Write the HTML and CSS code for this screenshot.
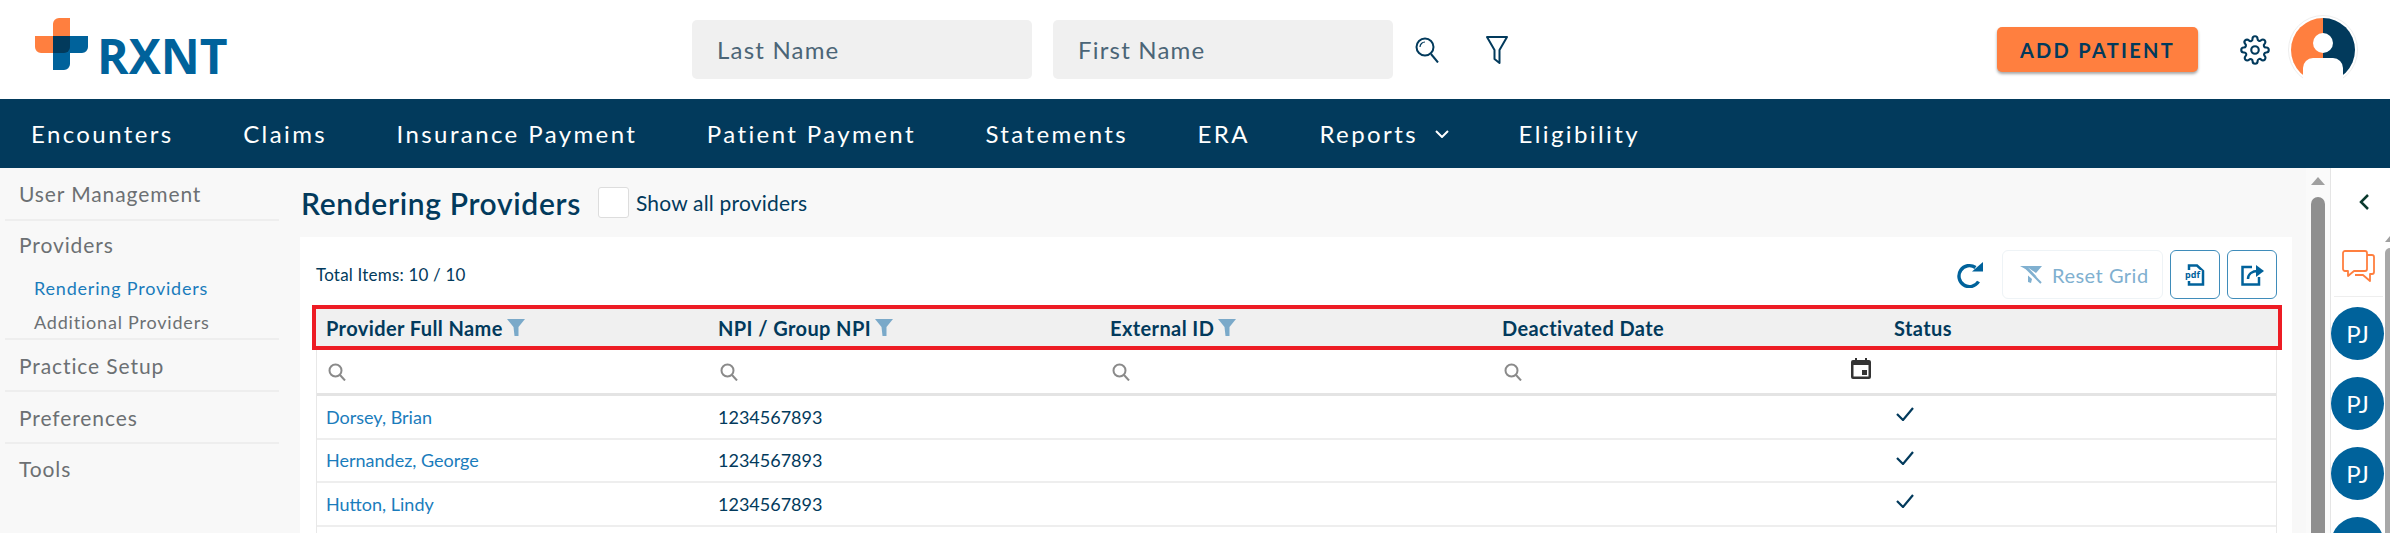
FILE: index.html
```html
<!DOCTYPE html>
<html lang="en">
<head>
    <meta charset="UTF-8">
    <meta name="viewport" content="width=device-width, initial-scale=1.0">
    <title>Rendering Providers</title>
    <link rel="stylesheet" href="styles.css">
</head>
<body>

    <!-- Top Header -->
    <header class="top-bar">
        <div class="logo">
            <svg class="logo-cross" viewBox="0 0 53 52" width="53" height="52">
                <path fill="#ff7f3f" d="M24 0H35V35H6a6 6 0 0 1-6-6V18H18V6a6 6 0 0 1 6-6z"/>
                <path fill="#00629b" d="M18 18H53V29a6 6 0 0 1-6 6H35V46a6 6 0 0 1-6 6H18z"/>
                <path fill="#023a5c" d="M18 18H35V29a6 6 0 0 1-6 6H18z"/>
            </svg>
            <span class="logo-text">RXNT</span>
        </div>
        <div class="name-search">
            <input class="name-input" type="text" placeholder="Last Name">
            <input class="name-input" type="text" placeholder="First Name">
        </div>
        <svg class="search-icon" viewBox="0 0 24 26" width="24" height="26" fill="none" stroke="#023a5c" stroke-width="2">
            <circle cx="10" cy="10" r="8.5"/>
            <path d="M16 17l7 8.5"/>
            <path d="M5 10a5 5 0 0 1 5-5" stroke-width="1.2"/>
        </svg>
        <svg class="funnel-icon" viewBox="0 0 22 28" width="22" height="28" fill="none" stroke="#023a5c" stroke-width="2">
            <path d="M1 1H21L13.5 14V27L8.500 23V14z" stroke-linejoin="round"/>
        </svg>
        <button class="add-patient">ADD PATIENT</button>
        <svg class="gear-icon" viewBox="0 0 24 24" width="30" height="30" fill="none" stroke="#023a5c" stroke-width="1.7" stroke-linejoin="round">
            <circle cx="12" cy="12" r="3"/>
            <path d="M19.400 15a1.650 1.650 0 0 0 .33 1.820l.06.06a2 2 0 1 1-2.830 2.830l-.06-.06a1.650 1.650 0 0 0-2.820 1.170V21a2 2 0 0 1-4 0v-.09a1.650 1.650 0 0 0-2.820-1.170l-.06.06a2 2 0 1 1-2.830-2.830l.06-.06A1.650 1.650 0 0 0 3.090 14H3a2 2 0 0 1 0-4h.09a1.650 1.650 0 0 0 1.170-2.820l-.06-.06a2 2 0 1 1 2.830-2.830l.06.06A1.650 1.650 0 0 0 10 3.090V3a2 2 0 0 1 4 0v.09a1.650 1.650 0 0 0 2.820 1.170l.06-.06a2 2 0 1 1 2.830 2.830l-.06.06A1.650 1.650 0 0 0 20.910 10H21a2 2 0 0 1 0 4h-.09a1.650 1.650 0 0 0-1.510 1z"/>
        </svg>
        <svg class="avatar" viewBox="0 0 70 70" width="70" height="70">
            <circle cx="35" cy="35" r="34.500" fill="#fff" stroke="#eeeeee"/>
            <path fill="#ff7f3f" d="M35 3a32 32 0 0 0 0 64z"/>
            <path fill="#023a5c" d="M35 3a32 32 0 0 1 0 64z"/>
            <circle cx="35" cy="28" r="10" fill="#fff"/>
            <path fill="#fff" d="M15 70V53a10 10 0 0 1 10-10H45a10 10 0 0 1 10 10V70z"/>
        </svg>
    </header>

    <!-- Main Nav -->
    <nav class="main-nav">
        <a class="nav-link">Encounters</a>
        <a class="nav-link">Claims</a>
        <a class="nav-link">Insurance Payment</a>
        <a class="nav-link">Patient Payment</a>
        <a class="nav-link">Statements</a>
        <a class="nav-link">ERA</a>
        <a class="nav-link">Reports
            <svg class="nav-chevron" viewBox="0 0 14 8" width="14" height="8" fill="none" stroke="#ffffff" stroke-width="2"><path d="M1 1l6 6 6-6"/></svg>
        </a>
        <a class="nav-link">Eligibility</a>
    </nav>

    <div class="page-body">
        <!-- Sidebar -->
        <aside class="sidebar">
            <div class="side-item first">User Management</div>
            <div class="side-group">
                <div class="side-head">Providers</div>
                <div class="side-sub active">Rendering Providers</div>
                <div class="side-sub">Additional Providers</div>
            </div>
            <div class="side-item">Practice Setup</div>
            <div class="side-item">Preferences</div>
            <div class="side-item last">Tools</div>
        </aside>

        <main class="content">
            <div class="title-row">
                <h1>Rendering Providers</h1>
                <span class="check-box"></span>
                <span class="check-label">Show all providers</span>
            </div>

            <section class="card">
                <div class="toolbar">
                    <span class="total-items">Total Items: 10 / 10</span>
                    <svg class="refresh-icon" viewBox="0 0 26 26" width="26" height="26" fill="none" stroke="#00629b" stroke-width="3.400">
                        <path d="M21.500 19.500A10.500 10.500 0 1 1 18.500 5.500"/>
                        <path fill="#00629b" stroke="none" d="M15 9.500H26V0z"/>
                    </svg>
                    <button class="reset-grid">
                        <svg viewBox="0 0 22 18" width="22" height="18">
                            <path fill="#80b0d0" d="M0 0H22L16 7 8 1.500 17 11 13 9 9 5z"/>
                            <path fill="#80b0d0" d="M8 9.500l4 3.500-1 4-3-1z"/>
                            <path stroke="#80b0d0" stroke-width="2" d="M5 1L21 17"/>
                        </svg>
                        Reset Grid
                    </button>
                    <button class="tool-btn">
                        <svg viewBox="0 0 20 22" width="20" height="22">
                            <path fill="none" stroke="#00629b" stroke-width="2.500" d="M4 6V1.500H12L18 7V20.500H4V17"/>
                            <text class="pdf-text" x="0" y="14">pdf</text>
                        </svg>
                    </button>
                    <button class="tool-btn">
                        <svg viewBox="0 0 23 22" width="23" height="22" fill="none" stroke="#00629b" stroke-width="2.500">
                            <path d="M11 3H1.500V20.500H18V13"/>
                            <path d="M7 15C7 10 11 7 17 7"/>
                            <path fill="#00629b" stroke="none" d="M15 1l8 6-8 6z"/>
                        </svg>
                    </button>
                </div>

                <!-- Grid -->
                <div class="grid">
                    <div class="grid-head">
                        <div class="col">Provider Full Name <svg class="col-filter" viewBox="0 0 18 17" width="18" height="17"><path fill="#7aa9c9" d="M0 0H18L11.500 8V17H7.500L6.500 8z"/></svg></div>
                        <div class="col">NPI / Group NPI <svg class="col-filter" viewBox="0 0 18 17" width="18" height="17"><path fill="#7aa9c9" d="M0 0H18L11.500 8V17H7.500L6.500 8z"/></svg></div>
                        <div class="col">External ID <svg class="col-filter" viewBox="0 0 18 17" width="18" height="17"><path fill="#7aa9c9" d="M0 0H18L11.500 8V17H7.500L6.500 8z"/></svg></div>
                        <div class="col">Deactivated Date</div>
                        <div class="col">Status</div>
                    </div>
                    <div class="grid-row filter-row">
                        <div class="col"><svg class="mini-search" viewBox="0 0 18 18" width="18" height="18" fill="none" stroke="#8a8a8a" stroke-width="2"><circle cx="7.500" cy="7.500" r="6"/><path d="M12 12l5 5.500"/></svg></div>
                        <div class="col"><svg class="mini-search" viewBox="0 0 18 18" width="18" height="18" fill="none" stroke="#8a8a8a" stroke-width="2"><circle cx="7.500" cy="7.500" r="6"/><path d="M12 12l5 5.500"/></svg></div>
                        <div class="col"><svg class="mini-search" viewBox="0 0 18 18" width="18" height="18" fill="none" stroke="#8a8a8a" stroke-width="2"><circle cx="7.500" cy="7.500" r="6"/><path d="M12 12l5 5.500"/></svg></div>
                        <div class="col date-col">
                            <svg class="mini-search" viewBox="0 0 18 18" width="18" height="18" fill="none" stroke="#8a8a8a" stroke-width="2"><circle cx="7.500" cy="7.500" r="6"/><path d="M12 12l5 5.500"/></svg>
                            <svg class="calendar" viewBox="0 0 20 21" width="20" height="21">
                                <path fill="#333333" d="M4 0H6V2H14V0H16V2H18a2 2 0 0 1 2 2V19a2 2 0 0 1-2 2H2a2 2 0 0 1-2-2V4a2 2 0 0 1 2-2H4z"/>
                                <path fill="#ffffff" d="M2.500 7H17.500V18.500H2.500z"/>
                                <path fill="#333333" d="M11 12H16V17H11z"/>
                            </svg>
                        </div>
                        <div class="col"></div>
                    </div>
                    <div class="grid-row">
                        <div class="col"><a class="provider-link">Dorsey, Brian</a></div>
                        <div class="col">1234567893</div>
                        <div class="col"></div>
                        <div class="col"></div>
                        <div class="col"><svg class="check" viewBox="0 0 18 14" width="18" height="14" fill="none" stroke="#023a5c" stroke-width="2.200"><path d="M1 7l6 6L17 1"/></svg></div>
                    </div>
                    <div class="grid-row">
                        <div class="col"><a class="provider-link">Hernandez, George</a></div>
                        <div class="col">1234567893</div>
                        <div class="col"></div>
                        <div class="col"></div>
                        <div class="col"><svg class="check" viewBox="0 0 18 14" width="18" height="14" fill="none" stroke="#023a5c" stroke-width="2.200"><path d="M1 7l6 6L17 1"/></svg></div>
                    </div>
                    <div class="grid-row">
                        <div class="col"><a class="provider-link">Hutton, Lindy</a></div>
                        <div class="col">1234567893</div>
                        <div class="col"></div>
                        <div class="col"></div>
                        <div class="col"><svg class="check" viewBox="0 0 18 14" width="18" height="14" fill="none" stroke="#023a5c" stroke-width="2.200"><path d="M1 7l6 6L17 1"/></svg></div>
                    </div>
                </div>
            </section>
        </main>

        <!-- Page scrollbar -->
        <div class="page-scroll">
            <span class="scroll-arrow"></span>
            <span class="scroll-thumb"></span>
        </div>

        <!-- Right Panel -->
        <aside class="right-panel">
            <div class="panel-top">
                <svg viewBox="0 0 10 16" width="10" height="16" fill="none" stroke="#0b3a2e" stroke-width="2.500"><path d="M9 1L2 8l7 7"/></svg>
            </div>
            <div class="panel-body">
                <div class="panel-list">
                    <div class="panel-chat">
                        <svg viewBox="0 0 33 32" width="33" height="32" fill="none" stroke="#ff7f3f" stroke-width="1.800" stroke-linejoin="round">
                            <path d="M3 1H23a2 2 0 0 1 2 2V19a2 2 0 0 1-2 2H12L6 26V21H3a2 2 0 0 1-2-2V3a2 2 0 0 1 2-2z"/>
                            <path d="M25 5H30a2 2 0 0 1 2 2V22a2 2 0 0 1-2 2H28V31L21 25H13"/>
                        </svg>
                    </div>
                    <div class="initials">PJ</div>
                    <div class="initials">PJ</div>
                    <div class="initials">PJ</div>
                    <div class="initials"></div>
                </div>
                <div class="panel-scroll">
                    <span class="panel-arrow"></span>
                    <span class="panel-thumb"></span>
                </div>
            </div>
        </aside>
    </div>

</body>
</html>
```

FILE: styles.css
```css
html, body {
    margin: 0;
    padding: 0;
    height: 100%;
    overflow: hidden;
}

body {
    display: flex;
    flex-direction: column;
    background-color: #ffffff;
    color: #023a5c;
    font-family: Lato, "Open Sans", sans-serif;
}

/* Header */
.top-bar {
    display: flex;
    align-items: center;
    height: 99px;
    flex-shrink: 0;
    padding: 0 32px 0 35px;
    box-sizing: border-box;
}

.logo {
    display: flex;
    align-items: flex-start;
    width: 657px;
    flex-shrink: 0;
}

.logo-text {
    margin: 12px 0 0 9px;
    font-family: "Open Sans", sans-serif;
    font-size: 48px;
    font-weight: 700;
    line-height: 52px;
    color: #00629b;
}

.name-search {
    display: flex;
    gap: 21px;
}

.name-input {
    width: 340px;
    height: 59px;
    box-sizing: border-box;
    padding: 0 25px;
    border: none;
    border-radius: 5px;
    background-color: #f0f0f0;
    font-family: Lato, sans-serif;
    font-size: 24px;
    letter-spacing: 1.200px;
}

.name-input::placeholder {
    color: #4b6577;
    opacity: 1;
}

.search-icon {
    margin-left: 22px;
}

.funnel-icon {
    margin-left: 47px;
}

.add-patient {
    margin-left: auto;
    width: 201px;
    height: 45px;
    border: none;
    border-radius: 5px;
    background-color: #ff7f3f;
    box-shadow: 0 2px 3px rgba(0, 0, 0, 0.35);
    color: #023a5c;
    font-family: Lato, sans-serif;
    font-size: 20px;
    font-weight: 700;
    letter-spacing: 2.300px;
}

.gear-icon {
    margin-left: 42px;
}

.avatar {
    margin-left: 18px;
}

/* Nav */
.main-nav {
    display: flex;
    align-items: center;
    gap: 69.500px;
    height: 69px;
    flex-shrink: 0;
    padding-left: 31px;
    box-sizing: border-box;
    background-color: #023a5c;
}

.nav-link {
    display: flex;
    align-items: center;
    color: #ffffff;
    font-size: 24px;
    letter-spacing: 2.400px;
}

.nav-chevron {
    margin-left: 17px;
}

/* Page body */
.page-body {
    display: flex;
    flex: 1;
    min-height: 0;
    background-color: #f8f8f8;
}

.sidebar {
    width: 282px;
    flex-shrink: 0;
    padding: 0 3px 0 5px;
    box-sizing: border-box;
    color: #6c7073;
    font-size: 21px;
}

.side-item, .side-head {
    display: flex;
    align-items: center;
    height: 52px;
    padding-left: 14px;
    box-sizing: border-box;
    border-bottom: 2px solid #eeeeee;
    letter-spacing: 0.900px;
}

.side-item.first {
    height: 53px;
}

.side-item.last {
    height: 49px;
    border-bottom: none;
}

.side-head {
    height: 47px;
    margin-bottom: 3px;
    border-bottom: none;
}

.side-group {
    border-bottom: 2px solid #eeeeee;
}

.side-sub {
    display: flex;
    align-items: center;
    height: 33px;
    padding-left: 29px;
    font-size: 18px;
    letter-spacing: 0.800px;
}

.side-sub.active {
    height: 34px;
    color: #1a7cbc;
}

.content {
    display: flex;
    flex-direction: column;
    flex: 1;
    min-width: 0;
    padding: 0 14px 0 18px;
}

.title-row {
    display: flex;
    align-items: center;
    height: 69px;
    flex-shrink: 0;
    padding-left: 1px;
}

h1 {
    margin: 0;
    font-size: 30px;
    font-weight: 600;
    letter-spacing: 0.650px;
}

.check-box {
    width: 31px;
    height: 31px;
    margin-left: 17px;
    box-sizing: border-box;
    background-color: #ffffff;
    border: 1px solid #dddddd;
    border-radius: 3px;
}

.check-label {
    margin-left: 7px;
    font-size: 21px;
    letter-spacing: 0.200px;
}

/* Card and grid */
.card {
    display: flex;
    flex-direction: column;
    flex: 1;
    padding: 0 15px 0 16px;
    background-color: #ffffff;
}

.toolbar {
    display: flex;
    align-items: center;
    height: 68px;
    flex-shrink: 0;
    padding-bottom: 4px;
    box-sizing: border-box;
    padding-top: 11px;
}

.total-items {
    margin-right: auto;
    font-size: 17px;
    letter-spacing: 0.200px;
}

.refresh-icon {
    margin-right: 19px;
}

.reset-grid {
    display: flex;
    align-items: center;
    gap: 10px;
    width: 161px;
    height: 49px;
    padding: 0 0 0 17px;
    box-sizing: border-box;
    background-color: #ffffff;
    border: 1px solid #eef3f6;
    border-radius: 6px;
    color: #80b0d0;
    font-family: Lato, sans-serif;
    font-size: 20px;
    letter-spacing: 0.500px;
}

.tool-btn {
    display: flex;
    align-items: center;
    justify-content: center;
    width: 50px;
    height: 49px;
    margin-left: 7px;
    padding: 0;
    background-color: #ffffff;
    border: 1.500px solid #3f8cba;
    border-radius: 6px;
}

.pdf-text {
    font-family: "Open Sans", sans-serif;
    font-size: 9px;
    font-weight: 700;
    fill: #00629b;
    stroke: #ffffff;
    stroke-width: 2px;
    paint-order: stroke;
}

.grid {
    display: flex;
    flex-direction: column;
    flex: 1;
    border-left: 1px solid #e8e8e8;
    border-right: 1px solid #e8e8e8;
}

.grid-head, .grid-row {
    display: grid;
    grid-template-columns: repeat(4, 392px) 1fr;
    align-items: center;
    box-sizing: border-box;
}

.grid-head {
    height: 45px;
    margin: 0 -6px 0 -5px;
    padding-left: 10px;
    border: 4px solid #ed1c24;
    background-color: #f0f0f0;
    font-size: 20px;
    font-weight: 700;
    letter-spacing: 0.400px;
}

.grid-row {
    height: 43.500px;
    padding-left: 9px;
    border-bottom: 2px solid #eeeeee;
    font-size: 18px;
}

.filter-row {
    height: 46px;
    border-bottom: 3px solid #e4e4e4;
}

.col {
    display: flex;
    align-items: center;
}

.col-filter {
    margin-left: 4px;
}

.mini-search {
    margin-left: 2px;
}

.date-col {
    justify-content: space-between;
    padding-right: 23px;
}

.calendar {
    margin-top: -6px;
}

.provider-link {
    color: #1a7cbc;
}

.check {
    margin-left: 2px;
    margin-top: -5px;
}

/* Scrollbars */
.page-scroll {
    display: flex;
    flex-direction: column;
    align-items: center;
    width: 24px;
    flex-shrink: 0;
    background-color: #fafafa;
}

.scroll-arrow {
    width: 0;
    height: 0;
    margin-top: 9px;
    border-left: 7px solid transparent;
    border-right: 7px solid transparent;
    border-bottom: 8px solid #a0a0a0;
}

.scroll-thumb {
    flex: 1;
    width: 14px;
    margin-top: 12px;
    border-radius: 7px 7px 0 0;
    background-color: #8f8f8f;
}

/* Right panel */
.right-panel {
    display: flex;
    flex-direction: column;
    width: 60px;
    flex-shrink: 0;
    box-sizing: border-box;
    background-color: #ffffff;
    border-left: 1px solid #e5e5e5;
}

.panel-top {
    display: flex;
    align-items: center;
    justify-content: center;
    height: 68px;
    flex-shrink: 0;
    padding-left: 6px;
}

.panel-body {
    display: flex;
    flex: 1;
    min-height: 0;
    overflow: hidden;
}

.panel-list {
    display: flex;
    flex-direction: column;
    width: 54px;
    flex-shrink: 0;
}

.panel-chat {
    display: flex;
    justify-content: center;
    height: 61px;
    padding-top: 14px;
    margin: 0 2px 0 3px;
    box-sizing: border-box;
    border-bottom: 1px solid #eeeeee;
    flex-shrink: 0;
}

.initials {
    display: flex;
    align-items: center;
    justify-content: center;
    width: 53px;
    height: 53px;
    margin-top: 17px;
    flex-shrink: 0;
    border-radius: 50%;
    background-color: #00629b;
    color: #ffffff;
    font-size: 24px;
}

.panel-chat + .initials {
    margin-top: 10px;
}

.panel-scroll {
    display: flex;
    flex-direction: column;
    flex: 1;
}

.panel-arrow {
    width: 0;
    height: 0;
    border-left: 5px solid transparent;
    border-bottom: 6px solid #a0a0a0;
}

.panel-thumb {
    flex: 1;
    margin-top: 6px;
    border-radius: 5px 0 0 0;
    background-color: #a8a8a8;
}
```
